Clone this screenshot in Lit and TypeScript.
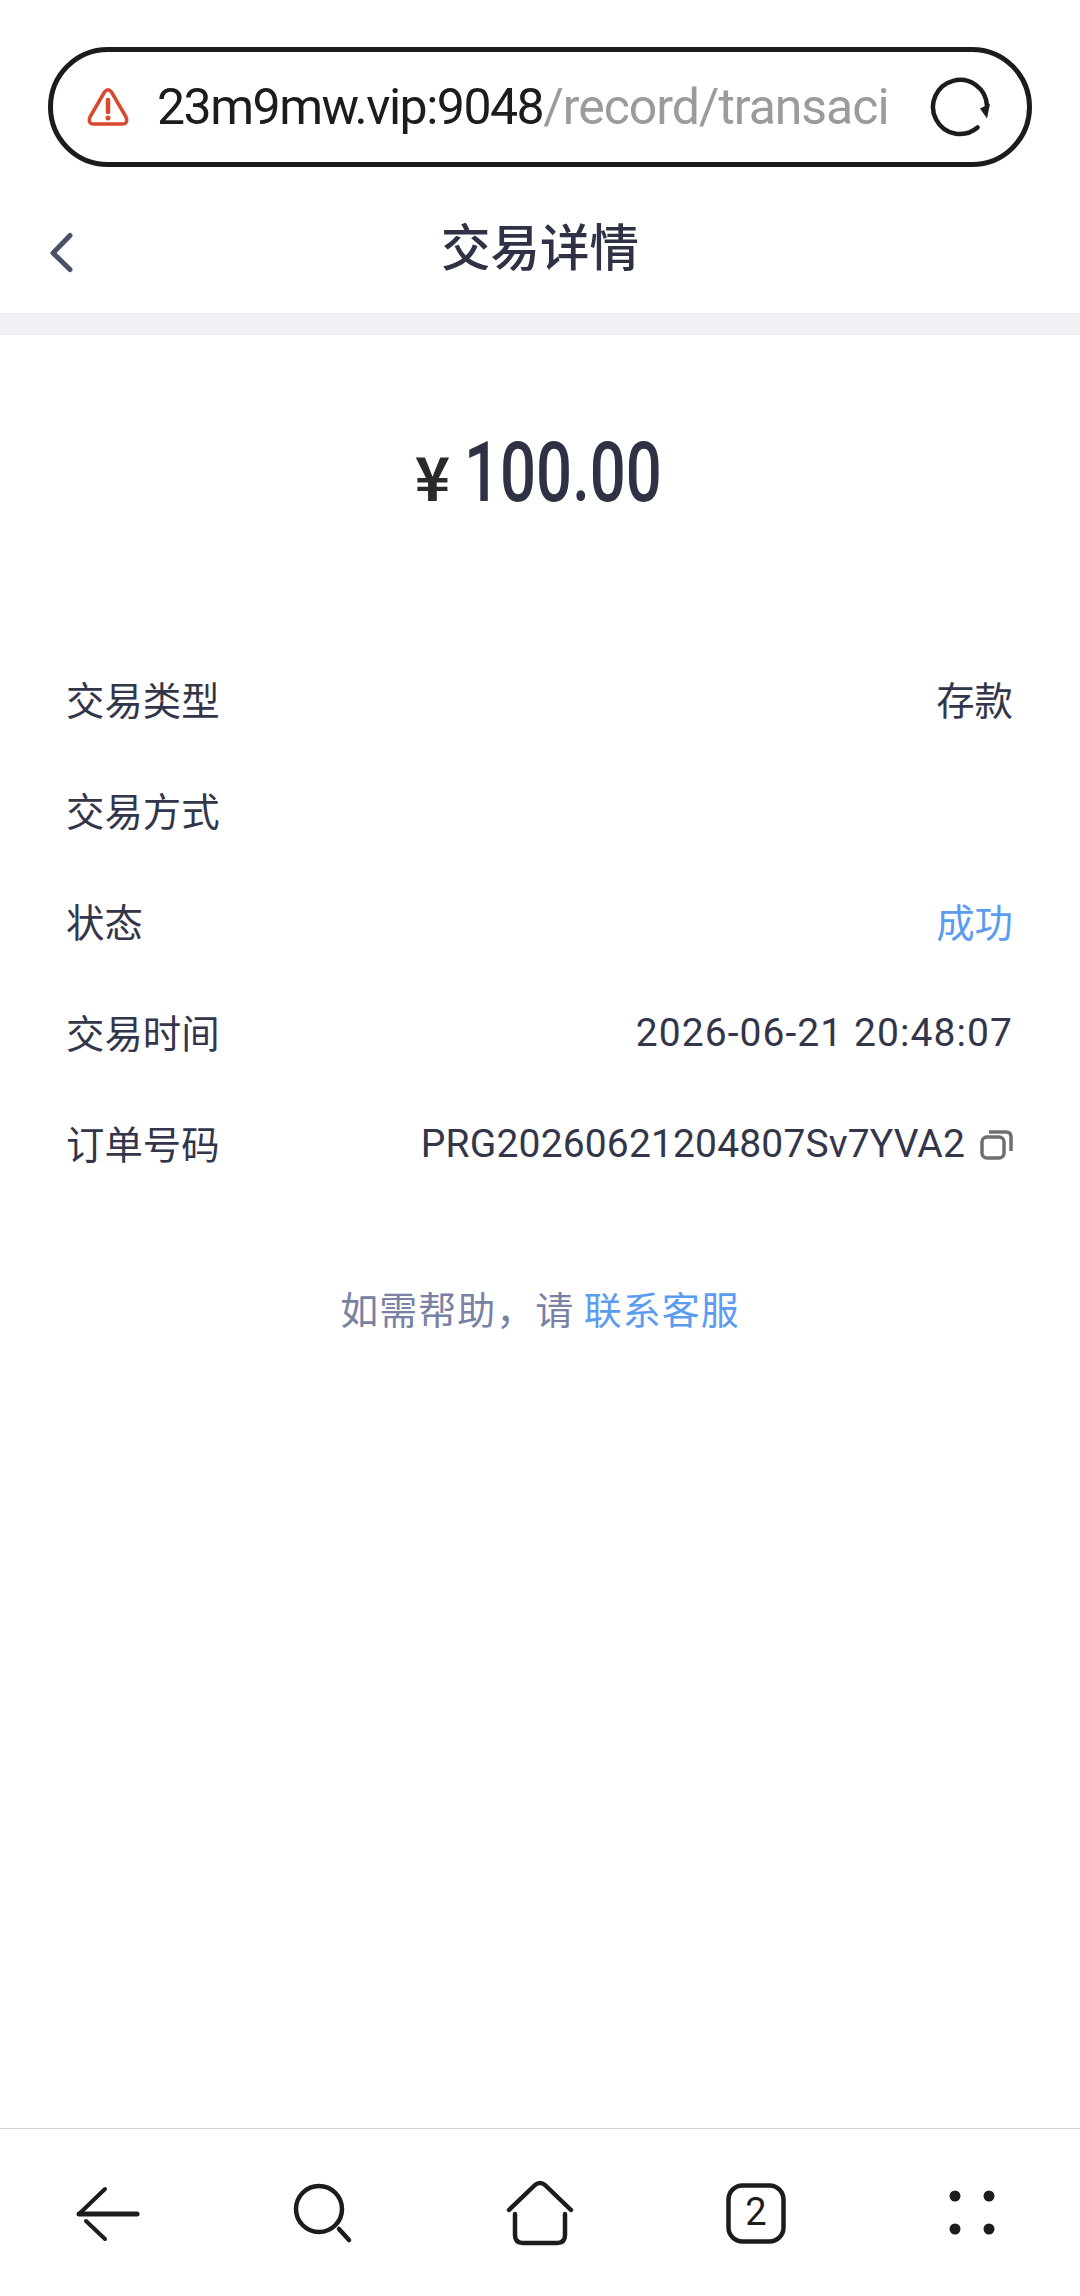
import { LitElement, html, css } from "lit";
import { customElement } from "lit/decorators.js";

const rows = [
  { label: "交易类型", value: "存款", kind: "" },
  { label: "交易方式", value: "", kind: "" },
  { label: "状态", value: "成功", kind: "ok" },
  { label: "交易时间", value: "2026-06-21 20:48:07", kind: "latin date" },
  { label: "订单号码", value: "PRG20260621204807Sv7YVA2", kind: "latin", copy: true },
];

@customElement("app-root")
export class AppRoot extends LitElement {
  static styles = css`
    :host {
      display: flex;
      flex-direction: column;
      width: 1080px;
      height: 2296px;
      background: #fff;
      font-family: Roboto, "Noto Sans CJK SC", sans-serif;
      color: #33364a;
    }
    .browser {
      padding: 47px 48px 0 48px;
    }
    .pill {
      display: flex;
      align-items: center;
      box-sizing: border-box;
      height: 120px;
      border: 5px solid #1c1c1c;
      border-radius: 60px;
      padding-left: 33px;
    }
    .warn {
      width: 44px;
      height: 40px;
      flex: none;
    }
    .url {
      width: 732px;
      margin-left: 27px;
      white-space: nowrap;
      font-size: 50px;
      letter-spacing: -1.5px;
      color: #1c1c1c;
    }
    .url span {
      color: #9b9b9b;
      letter-spacing: -1.05px;
    }
    .reload {
      width: 62px;
      height: 62px;
      margin-left: 41px;
      flex: none;
    }
    .nav {
      position: relative;
      display: flex;
      align-items: center;
      justify-content: center;
      box-sizing: border-box;
      height: 146px;
      padding-top: 9px;
      font-size: 49.5px;
      font-weight: 500;
      color: #2e3244;
    }
    .nav svg {
      position: absolute;
      left: 48px;
      top: 63px;
      width: 26px;
      height: 44px;
    }
    .strip {
      height: 22px;
      background: #f0f0f5;
    }
    .amount {
      display: flex;
      align-items: baseline;
      justify-content: center;
      gap: 14px;
      height: 100px;
      padding: 88px 8px 120px 0;
      line-height: 100px;
    }
    .yen {
      font-family: "Noto Sans CJK SC", sans-serif;
      font-size: 60px;
      font-weight: 700;
      color: #2a2a2a;
    }
    .num {
      display: inline-block;
      width: 193px;
      font-size: 84px;
      font-weight: 500;
      color: #2e3244;
      transform: scaleX(0.755);
      transform-origin: left;
    }
    .rows {
      display: flex;
      flex-direction: column;
      padding: 0 67px 0 66px;
    }
    .row {
      display: flex;
      align-items: center;
      justify-content: space-between;
      height: 110.8px;
      font-size: 38.4px;
      font-family: "Noto Sans CJK SC", sans-serif;
    }
    .value {
      display: flex;
      align-items: center;
      gap: 15px;
    }
    .latin {
      padding-top: 5px;
      font-family: Roboto, sans-serif;
      font-size: 39px;
      letter-spacing: 0.15px;
    }
    .date {
      letter-spacing: 1.07px;
    }
    .ok {
      color: #5b9bf0;
    }
    .copy {
      width: 33px;
      height: 31px;
    }
    .help {
      margin-top: 83px;
      text-align: center;
      font-size: 38px;
      letter-spacing: 1px;
      font-family: "Noto Sans CJK SC", sans-serif;
      color: #7981a4;
    }
    .help a {
      color: #5b9bf0;
    }
    main {
      flex: 1;
    }
    .bar {
      display: grid;
      grid-template-columns: repeat(5, 1fr);
      align-items: center;
      justify-items: center;
      height: 167px;
      border-top: 1px solid #d0d0d0;
    }
    .bar svg {
      width: 80px;
      height: 80px;
    }
    .tabs {
      font-family: Roboto, sans-serif;
      font-size: 38px;
      fill: #1c1c1c;
    }
  `;

  render() {
    return html`
      <div class="browser">
        <div class="pill">
          <svg class="warn" viewBox="0 0 44 40" fill="none" stroke="#d9482f" stroke-width="3.5" stroke-linejoin="round">
            <path d="M18.500 5 Q22 0.500 25.500 5 L40 30 Q42.500 37 36 37 H8 Q1.500 37 4 30 Z" />
            <path d="M22 13 V25" stroke-width="4.500" stroke-linecap="round" />
            <circle cx="22" cy="31" r="2.500" fill="#d9482f" stroke="none" />
          </svg>
          <div class="url">23m9mw.vip:9048<span>/record/transaci</span></div>
          <svg class="reload" viewBox="0 0 62 62" fill="none" stroke="#1c1c1c" stroke-width="4.500" stroke-linecap="round">
            <path d="M57 30 A27 27 0 1 0 47.500 51.500" />
            <path d="M50 32.500 L60 27.500 L57 42.500 Z" fill="#1c1c1c" stroke="none" />
          </svg>
        </div>
      </div>
      <div class="nav">
        <svg viewBox="0 0 26 44" fill="none" stroke="#4a5068" stroke-width="5" stroke-linecap="round" stroke-linejoin="round">
          <path d="M22 5.500 L5 23 L22 39.500" />
        </svg>
        交易详情
      </div>
      <div class="strip"></div>
      <main>
        <div class="amount">
          <span class="yen">¥</span><span class="num">100.00</span>
        </div>
        <div class="rows">
          ${rows.map(
            (r) => html`
              <div class="row">
                <span>${r.label}</span>
                <span class="value ${r.kind}">
                  ${r.value}
                  ${r.copy
                    ? html`<svg class="copy" viewBox="0 0 33 31" fill="none" stroke="#6f6f6f" stroke-width="3.5">
                        <rect x="2" y="8" width="22" height="21" rx="5" />
                        <path d="M9 3 H26 Q31 3 31 8 V22" />
                      </svg>`
                    : ""}
                </span>
              </div>
            `
          )}
        </div>
        <div class="help">如需帮助，请 <a>联系客服</a></div>
      </main>
      <div class="bar">
        <svg viewBox="0 0 80 80" fill="none" stroke="#1c1c1c" stroke-width="4" stroke-linecap="round" stroke-linejoin="round">
          <path d="M11 41 H69" stroke-width="5" />
          <path d="M37 16 L11 41" />
          <path d="M18 48 L37 66" />
        </svg>
        <svg viewBox="0 0 80 80" fill="none" stroke="#1c1c1c" stroke-width="4.500" stroke-linecap="round">
          <circle cx="35" cy="36" r="23" />
          <path d="M55 56 L65 67" />
        </svg>
        <svg viewBox="0 0 80 80" fill="none" stroke="#1c1c1c" stroke-width="4.500" stroke-linecap="round" stroke-linejoin="round">
          <path d="M9 37 L35 12 Q40 8 45 12 L71 37" />
          <path d="M15 41 V62 Q15 70 23 70 H57 Q65 70 65 62 V41" />
        </svg>
        <svg viewBox="0 0 80 80" fill="none" stroke="#1c1c1c" stroke-width="4.500">
          <rect x="12.500" y="12.500" width="55" height="56" rx="14" />
          <text class="tabs" x="40" y="52" text-anchor="middle" stroke="none">2</text>
        </svg>
        <svg viewBox="0 0 80 80" fill="#1c1c1c">
          <circle cx="23" cy="23" r="5.500" />
          <circle cx="57" cy="23" r="5.500" />
          <circle cx="23" cy="56" r="5.500" />
          <circle cx="57" cy="56" r="5.500" />
        </svg>
      </div>
    `;
  }
}
